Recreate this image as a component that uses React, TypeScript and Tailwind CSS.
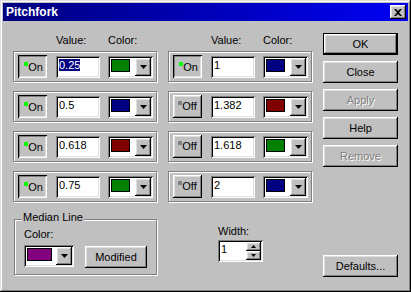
const RAISED =
  "shadow-[inset_-1px_-1px_0_#000,inset_1px_1px_0_#fff,inset_-2px_-2px_0_#808080,inset_2px_2px_0_#dfdfdf]";
const PRESSED =
  "shadow-[inset_1px_1px_0_#000,inset_-1px_-1px_0_#fff,inset_2px_2px_0_#808080,inset_-2px_-2px_0_#dfdfdf]";
const SUNKEN =
  "shadow-[inset_1px_1px_0_#808080,inset_-1px_-1px_0_#fff,inset_2px_2px_0_#000,inset_-2px_-2px_0_#dfdfdf]";
const ETCHED = "border border-[#808080] shadow-[inset_1px_1px_0_#fff,1px_1px_0_#fff]";

interface LevelRow {
  on: boolean;
  value: string;
  color: string;
  selected?: boolean;
}

const LEFT_ROWS: LevelRow[] = [
  { on: true, value: "0.25", color: "#008000", selected: true },
  { on: true, value: "0.5", color: "#000080" },
  { on: true, value: "0.618", color: "#800000" },
  { on: true, value: "0.75", color: "#008000" }
];

const RIGHT_ROWS: LevelRow[] = [
  { on: true, value: "1", color: "#000080" },
  { on: false, value: "1.382", color: "#800000" },
  { on: false, value: "1.618", color: "#008000" },
  { on: false, value: "2", color: "#000080" }
];

function DownArrow() {
  return (
    <svg width="7" height="4" viewBox="0 0 7 4" className="block">
      <path d="M0 0h7L3.5 4z" fill="#000" />
    </svg>
  );
}

function ColorCombo({ color, width, swatch }: { color: string; width: string; swatch: string }) {
  return (
    <div className={`flex h-[22px] ${width} items-stretch bg-white p-[2px] ${SUNKEN}`}>
      <div className="flex flex-1 items-start pl-[1px] pt-[1px]">
        <div className={`h-[13px] ${swatch} border border-black`} style={{ backgroundColor: color }} />
      </div>
      <div className={`flex w-[16px] items-center justify-center bg-[#c0c0c0] ${RAISED}`}>
        <DownArrow />
      </div>
    </div>
  );
}

function ToggleButton({ on }: { on: boolean }) {
  return (
    <div
      className={`flex h-[23px] w-[29px] items-center justify-center bg-[#c0c0c0] ${
        on ? `${PRESSED} pl-[2px] pt-[2px]` : RAISED
      }`}
    >
      <span className="flex items-start">
        <span className={`mt-[1px] size-[4px] ${on ? "bg-[#00ff00]" : "bg-[#808080]"}`} />
        <span>{on ? "On" : "Off"}</span>
      </span>
    </div>
  );
}

function LevelColumn({ rows }: { rows: LevelRow[] }) {
  return (
    <div className="flex flex-col">
      <div className="mt-[13px] flex h-[13px] pl-[43px]">
        <span className="w-[52px]">Value:</span>
        <span>Color:</span>
      </div>
      <div className="mt-[4px] flex flex-col gap-[9px]">
        {rows.map((row, i) => (
          <div key={i} className={`flex h-[31px] w-[144px] items-center pl-[4px] ${ETCHED}`}>
            <ToggleButton on={row.on} />
            <div className={`ml-[9px] h-[22px] w-[44px] bg-white px-[3px] pt-[3px] ${SUNKEN}`}>
              {row.selected ? (
                <span className="bg-[#000080] text-white">{row.value}</span>
              ) : (
                <span>{row.value}</span>
              )}
            </div>
            <div className="ml-[8px]">
              <ColorCombo color={row.color} width="w-[45px]" swatch="w-[19px]" />
            </div>
          </div>
        ))}
      </div>
    </div>
  );
}

function DialogButton({
  label,
  isDefault,
  disabled
}: {
  label: string;
  isDefault?: boolean;
  disabled?: boolean;
}) {
  return (
    <div className={`h-[22px] w-[75px] ${isDefault ? "border border-black" : ""}`}>
      <div
        className={`flex h-full w-full items-center justify-center bg-[#c0c0c0] ${RAISED} ${
          disabled ? "text-[#808080] [text-shadow:1px_1px_0_#fff]" : ""
        }`}
      >
        {label}
      </div>
    </div>
  );
}

export default function App() {
  return (
    <div
      className={`flex h-[292px] w-[411px] flex-col bg-[#c0c0c0] p-[3px] font-['Liberation_Sans',Arial,sans-serif] text-[11px] leading-[13px] text-black shadow-[inset_-1px_-1px_0_#000,inset_1px_1px_0_#dfdfdf,inset_-2px_-2px_0_#808080,inset_2px_2px_0_#fff]`}
    >
      <div className="flex h-[18px] items-center justify-between bg-linear-to-r from-[#000080] to-[#0000f4] pl-[3px] pr-[2px]">
        <span className="text-[12px] font-bold leading-[14px] text-white">Pitchfork</span>
        <div className={`flex h-[14px] w-[16px] items-center justify-center bg-[#c0c0c0] ${RAISED}`}>
          <svg width="8" height="7" viewBox="0 0 8 7" className="block">
            <path d="M0 0h2l2 2 2-2h2L5 3.5 8 7H6L4 5 2 7H0l3-3.5z" fill="#000" />
          </svg>
        </div>
      </div>

      <div className="flex flex-1 pl-[10px]">
        <div className="flex w-[144px] flex-col">
          <LevelColumn rows={LEFT_ROWS} />
          <div className={`relative ml-[1px] mt-[17px] h-[56px] ${ETCHED}`}>
            <span className="absolute left-[7px] top-[-9px] bg-[#c0c0c0] px-[1px]">Median Line</span>
            <div className="pl-[9px] pt-[8px]">Color:</div>
            <div className="mt-[4px] flex items-start pl-[9px]">
              <div className="h-[23px]">
                <ColorCombo color="#800080" width="w-[50px]" swatch="w-[25px]" />
              </div>
              <div className={`ml-[11px] mt-[1px] flex h-[22px] w-[62px] items-center justify-center ${RAISED}`}>
                Modified
              </div>
            </div>
          </div>
        </div>

        <div className="ml-[11px] flex w-[144px] flex-col">
          <LevelColumn rows={RIGHT_ROWS} />
          <div className="mt-[23px] pl-[50px]">
            <div>Width:</div>
            <div className={`mt-[2px] flex h-[22px] w-[45px] bg-white p-[2px] ${SUNKEN}`}>
              <span className="flex-1 pl-[1px] pt-[1px]">1</span>
              <div className="flex w-[15px] flex-col">
                <div className={`flex flex-1 items-center justify-center bg-[#c0c0c0] ${RAISED}`}>
                  <svg width="5" height="3" viewBox="0 0 5 3" className="block">
                    <path d="M2.5 0L5 3H0z" fill="#000" />
                  </svg>
                </div>
                <div className={`flex flex-1 items-center justify-center bg-[#c0c0c0] ${RAISED}`}>
                  <svg width="5" height="3" viewBox="0 0 5 3" className="block">
                    <path d="M0 0h5L2.5 3z" fill="#000" />
                  </svg>
                </div>
              </div>
            </div>
          </div>
        </div>

        <div className="ml-[11px] flex w-[75px] flex-col pb-[12px] pt-[12px]">
          <div className="flex flex-col gap-[6px]">
            <DialogButton label="OK" isDefault />
            <DialogButton label="Close" />
            <DialogButton label="Apply" disabled />
            <DialogButton label="Help" />
            <DialogButton label="Remove" disabled />
          </div>
          <div className="mt-auto">
            <DialogButton label="Defaults..." />
          </div>
        </div>
      </div>
    </div>
  );
}
